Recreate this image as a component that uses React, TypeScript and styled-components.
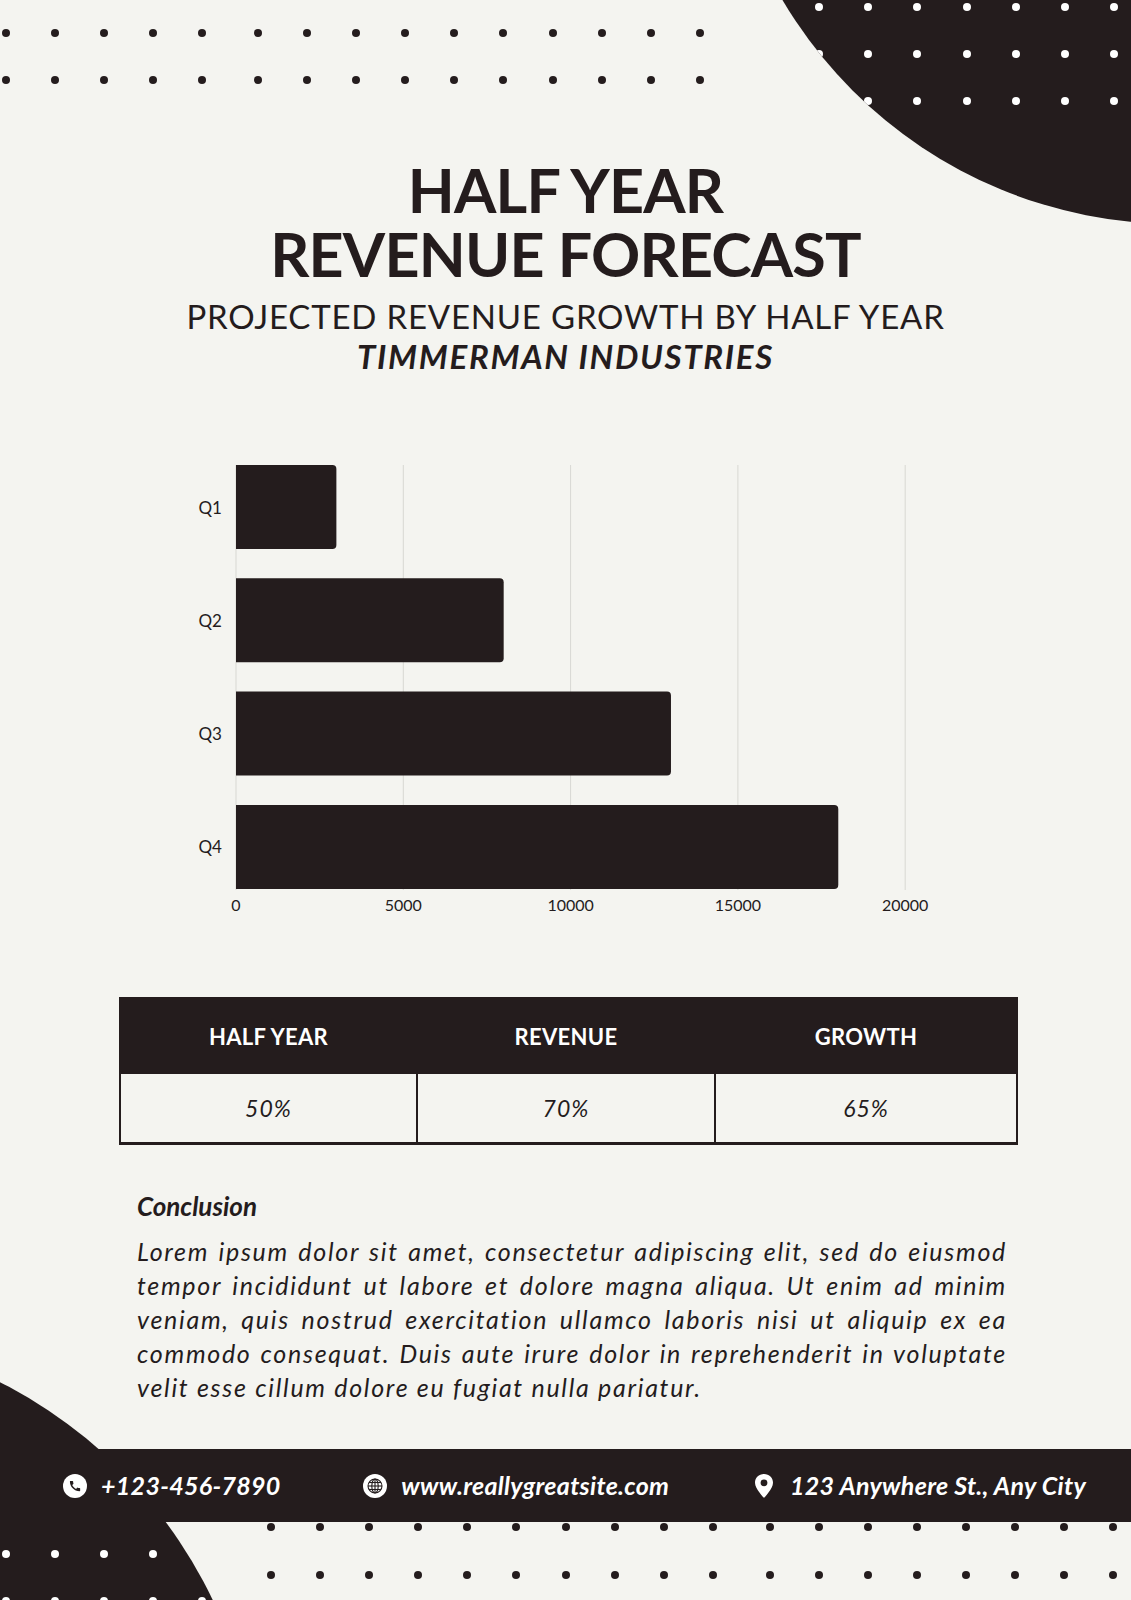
import React from 'react'
import styled, { createGlobalStyle } from 'styled-components'

const INK = '#241c1d'
const PAPER = '#f4f4f0'

const GlobalStyle = createGlobalStyle`
  html, body {
    margin: 0;
    padding: 0;
    background: ${PAPER};
  }
  body {
    font-family: Lato, 'Noto Sans', sans-serif;
    color: ${INK};
  }
`

const Page = styled.div`
  position: relative;
  width: 1131px;
  height: 1600px;
  overflow: hidden;
  background: ${PAPER};
`

const Blob = styled.div<{ $left: number; $top: number; $size: number }>`
  position: absolute;
  left: ${p => p.$left}px;
  top: ${p => p.$top}px;
  width: ${p => p.$size}px;
  height: ${p => p.$size}px;
  border-radius: 50%;
  background: ${INK};
  overflow: hidden;
  z-index: 0;
`

const Dots = styled.div<{ $left: number; $top: number; $cols: number; $gapX: number; $gapY: number }>`
  position: absolute;
  left: ${p => p.$left}px;
  top: ${p => p.$top}px;
  display: grid;
  grid-template-columns: repeat(${p => p.$cols}, 8px);
  column-gap: ${p => p.$gapX}px;
  row-gap: ${p => p.$gapY}px;
  z-index: 0;
`

const Dot = styled.span<{ $light?: boolean }>`
  width: 8px;
  height: 8px;
  border-radius: 50%;
  background: ${p => (p.$light ? '#ffffff' : INK)};
`

const Content = styled.main`
  position: relative;
  z-index: 1;
  display: flex;
  flex-direction: column;
  align-items: center;
  padding-top: 158px;
`

const Title = styled.h1`
  margin: 0;
  font-family: Lato, sans-serif;
  font-weight: 700;
  font-size: 61px;
  line-height: 64px;
  letter-spacing: -0.8px;
  text-align: center;
  color: ${INK};
`

const Subtitle = styled.p`
  margin: 12px 0 0;
  font-family: Lato, sans-serif;
  font-weight: 400;
  font-size: 33px;
  line-height: 36px;
  letter-spacing: 0.8px;
  text-align: center;
`

const Company = styled.p`
  margin: 4px 0 0;
  font-family: Lato, sans-serif;
  font-weight: 700;
  font-style: italic;
  font-size: 33px;
  line-height: 36px;
  letter-spacing: 1.7px;
  text-align: center;
`

const ChartSvg = styled.svg`
  align-self: flex-start;
  margin: 76px 0 0 180px;
  display: block;

  text {
    font-family: Lato, 'Noto Sans', sans-serif;
    fill: ${INK};
  }
`

const Table = styled.div`
  align-self: flex-start;
  margin: 67px 0 0 119px;
  width: 899px;
  box-sizing: border-box;
  display: grid;
  grid-template-columns: 295px 296px 1fr;
  column-gap: 2px;
  border: 2px solid ${INK};
  border-bottom-width: 3px;
  background: ${INK};
`

const HeadCell = styled.div`
  height: 75px;
  display: flex;
  align-items: center;
  justify-content: center;
  background: ${INK};
  color: #ffffff;
  font-family: Lato, sans-serif;
  font-weight: 700;
  font-size: 22px;
  letter-spacing: 0.3px;
`

const Cell = styled.div`
  height: 68px;
  display: flex;
  align-items: center;
  justify-content: center;
  background: ${PAPER};
  font-family: Lato, sans-serif;
  font-style: italic;
  font-size: 23px;
  letter-spacing: 1px;
`

const Conclusion = styled.section`
  align-self: flex-start;
  margin: 45px 0 0 137px;
  width: 870px;
`

const ConclusionTitle = styled.h2`
  margin: 0;
  font-family: Lato, sans-serif;
  font-weight: 700;
  font-style: italic;
  font-size: 26px;
  line-height: 32px;
`

const Body = styled.p`
  margin: 12px 0 0;
  font-family: Lato, sans-serif;
  font-style: italic;
  font-size: 25px;
  line-height: 34px;
  letter-spacing: 1.7px;
`

const BodyLine = styled.span<{ $last?: boolean }>`
  display: block;
  white-space: nowrap;
  text-align: ${p => (p.$last ? 'left' : 'justify')};
  text-align-last: ${p => (p.$last ? 'left' : 'justify')};
`

const Footer = styled.footer`
  align-self: stretch;
  margin-top: 45px;
  height: 73px;
  box-sizing: border-box;
  padding: 0 45px 0 63px;
  background: ${INK};
  display: flex;
  align-items: center;
  justify-content: space-between;
  color: #ffffff;
`

const Contact = styled.div`
  display: flex;
  align-items: center;
  gap: 14px;
  font-family: Lato, sans-serif;
  font-weight: 700;
  font-style: italic;
  font-size: 25px;
  line-height: 1;
  letter-spacing: 0.3px;

  svg {
    flex: none;
  }
`

const bars = [
  { label: 'Q1', value: 3000 },
  { label: 'Q2', value: 8000 },
  { label: 'Q3', value: 13000 },
  { label: 'Q4', value: 18000 },
]
const ticks = [0, 5000, 10000, 15000, 20000]

const bodyLines = [
  'Lorem ipsum dolor sit amet, consectetur adipiscing elit, sed do eiusmod',
  'tempor incididunt ut labore et dolore magna aliqua. Ut enim ad minim',
  'veniam, quis nostrud exercitation ullamco laboris nisi ut aliquip ex ea',
  'commodo consequat. Duis aute irure dolor in reprehenderit in voluptate',
  'velit esse cillum dolore eu fugiat nulla pariatur.',
]

const X0 = 56
const PX = 167.3 / 5000
const TOP = 15
const PITCH = 113.3
const BAR_H = 84
const BOTTOM = 440

const barPath = (y: number, x1: number) => {
  const r = 4
  return `M${X0} ${y} H${x1 - r} Q${x1} ${y} ${x1} ${y + r} V${y + BAR_H - r} Q${x1} ${y + BAR_H} ${x1 - r} ${y + BAR_H} H${X0} Z`
}

const Chart = () => (
  <ChartSvg width={760} height={480} viewBox="0 0 760 480">
    {ticks.map(t => (
      <line key={t} x1={X0 + t * PX} x2={X0 + t * PX} y1={TOP} y2={BOTTOM} stroke="#d8d8d3" strokeWidth={1} />
    ))}
    {bars.map((b, i) => {
      const y = TOP + i * PITCH
      return (
        <g key={b.label}>
          <path d={barPath(y, X0 + b.value * PX)} fill={INK} />
          <text x={42} y={y + BAR_H / 2} textAnchor="end" dominantBaseline="central" fontSize={17}>
            {b.label}
          </text>
        </g>
      )
    })}
    {ticks.map(t => (
      <text key={t} x={X0 + t * PX} y={454} textAnchor="middle" dominantBaseline="central" fontSize={16}>
        {t}
      </text>
    ))}
  </ChartSvg>
)

const PhoneIcon = () => (
  <svg width="24" height="24" viewBox="0 0 24 24">
    <circle cx="12" cy="12" r="12" fill="#fff" />
    <path
      transform="translate(5.2 5.2) scale(0.57)"
      fill={INK}
      d="M20.01 15.38c-1.23 0-2.42-.2-3.53-.56a.977.977 0 0 0-1.01.24l-1.57 1.97c-2.83-1.35-5.48-3.9-6.89-6.83l1.95-1.66c.27-.28.35-.67.24-1.02-.37-1.11-.56-2.3-.56-3.53 0-.54-.45-.99-.99-.99H4.19C3.65 3 3 3.24 3 3.99 3 13.28 10.73 21 20.01 21c.71 0 .99-.63.99-1.18v-3.45c0-.54-.45-.99-.99-.99z"
    />
  </svg>
)

const GlobeIcon = () => (
  <svg width="24" height="24" viewBox="0 0 24 24">
    <circle cx="12" cy="12" r="12" fill="#fff" />
    <g fill="none" stroke={INK} strokeWidth="1.1">
      <circle cx="12" cy="12" r="7" />
      <ellipse cx="12" cy="12" rx="3.2" ry="7" />
      <line x1="12" y1="5" x2="12" y2="19" />
      <line x1="5" y1="12" x2="19" y2="12" />
      <line x1="6" y1="8.5" x2="18" y2="8.5" />
      <line x1="6" y1="15.5" x2="18" y2="15.5" />
    </g>
  </svg>
)

const PinIcon = () => (
  <svg width="24" height="26" viewBox="0 0 24 26">
    <path
      fill="#fff"
      fillRule="evenodd"
      d="M12 1C6.8 1 3 4.9 3 9.8c0 6 9 15.2 9 15.2s9-9.2 9-15.2C21 4.9 17.2 1 12 1z M12 6.4a3.4 3.4 0 1 0 0 6.8a3.4 3.4 0 1 0 0-6.8z"
    />
  </svg>
)

const DotField = ({
  left,
  top,
  cols,
  rows,
  light,
  gapX = 41.2,
  gapY = 39,
}: {
  left: number
  top: number
  cols: number
  rows: number
  light?: boolean
  gapX?: number
  gapY?: number
}) => (
  <Dots $left={left} $top={top} $cols={cols} $gapX={gapX} $gapY={gapY}>
    {Array.from({ length: cols * rows }).map((_, i) => (
      <Dot key={i} $light={light} />
    ))}
  </Dots>
)

export default function App() {
  return (
    <Page>
      <GlobalStyle />

      <DotField left={2} top={29} cols={5} rows={2} gapX={41} gapY={39} />
      <DotField left={254} top={29} cols={10} rows={2} gapX={41.1} gapY={39} />

      <Blob $left={719} $top={-688} $size={912}>
        <DotField left={96} top={691} cols={7} rows={3} light gapX={41.2} gapY={39} />
      </Blob>

      <Blob $left={-687} $top={1331} $size={946}>
        <DotField left={689} top={219} cols={5} rows={2} light gapX={41} gapY={39} />
      </Blob>

      <DotField left={267} top={1523} cols={10} rows={2} gapX={41.1} gapY={40} />
      <DotField left={766} top={1523} cols={8} rows={2} gapX={41} gapY={40} />

      <Content>
        <Title>
          HALF YEAR
          <br />
          REVENUE FORECAST
        </Title>
        <Subtitle>PROJECTED REVENUE GROWTH BY HALF YEAR</Subtitle>
        <Company>TIMMERMAN INDUSTRIES</Company>

        <Chart />

        <Table>
          <HeadCell>HALF YEAR</HeadCell>
          <HeadCell>REVENUE</HeadCell>
          <HeadCell>GROWTH</HeadCell>
          <Cell>50%</Cell>
          <Cell>70%</Cell>
          <Cell>65%</Cell>
        </Table>

        <Conclusion>
          <ConclusionTitle>Conclusion</ConclusionTitle>
          <Body>
            {bodyLines.map((line, i) => (
              <BodyLine key={i} $last={i === bodyLines.length - 1}>
                {line}
              </BodyLine>
            ))}
          </Body>
        </Conclusion>

        <Footer>
          <Contact>
            <PhoneIcon />
            +123-456-7890
          </Contact>
          <Contact>
            <GlobeIcon />
            www.reallygreatsite.com
          </Contact>
          <Contact>
            <PinIcon />
            123 Anywhere St., Any City
          </Contact>
        </Footer>
      </Content>
    </Page>
  )
}
